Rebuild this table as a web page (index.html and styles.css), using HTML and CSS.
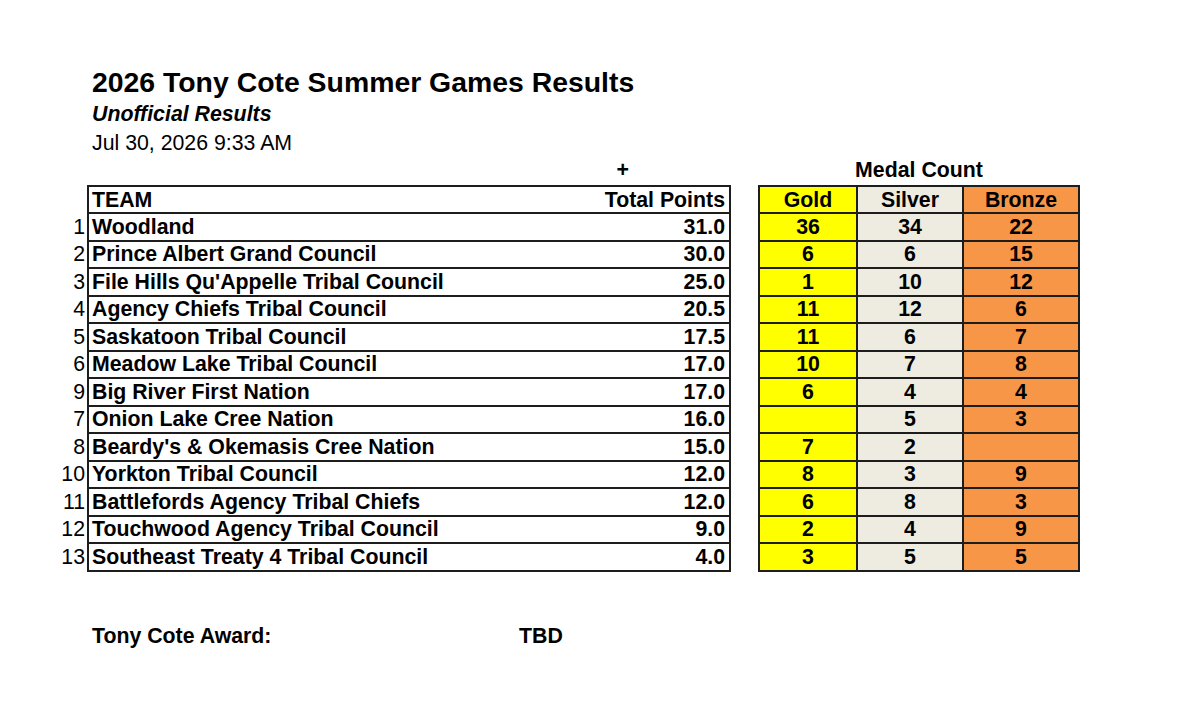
FILE: index.html
```html
<!DOCTYPE html>
<html lang="en">
<head>
<meta charset="utf-8">
<title>2026 Tony Cote Summer Games Results</title>
<link rel="stylesheet" href="styles.css">
</head>
<body>
<div class="page">
  <header class="head">
    <h1 class="title">2026 Tony Cote Summer Games Results</h1>
    <p class="subtitle">Unofficial Results</p>
    <p class="stamp">Jul 30, 2026 9:33 AM</p>
  </header>

  <div class="tables">
    <table class="standings">
      <colgroup>
        <col class="c-rank">
        <col class="c-team">
        <col class="c-points">
      </colgroup>
      <thead>
        <tr class="pre">
          <th class="blank"></th>
          <th class="blank"></th>
          <th class="plus">+</th>
        </tr>
        <tr class="hdr">
          <th class="rank"></th>
          <th class="team">TEAM</th>
          <th class="points">Total Points</th>
        </tr>
      </thead>
      <tbody>
        <tr><td class="rank">1</td><td class="team">Woodland</td><td class="points">31.0</td></tr>
        <tr><td class="rank">2</td><td class="team">Prince Albert Grand Council</td><td class="points">30.0</td></tr>
        <tr><td class="rank">3</td><td class="team">File Hills Qu'Appelle Tribal Council</td><td class="points">25.0</td></tr>
        <tr><td class="rank">4</td><td class="team">Agency Chiefs Tribal Council</td><td class="points">20.5</td></tr>
        <tr><td class="rank">5</td><td class="team">Saskatoon Tribal Council</td><td class="points">17.5</td></tr>
        <tr><td class="rank">6</td><td class="team">Meadow Lake Tribal Council</td><td class="points">17.0</td></tr>
        <tr><td class="rank">9</td><td class="team">Big River First Nation</td><td class="points">17.0</td></tr>
        <tr><td class="rank">7</td><td class="team">Onion Lake Cree Nation</td><td class="points">16.0</td></tr>
        <tr><td class="rank">8</td><td class="team">Beardy's &amp; Okemasis Cree Nation</td><td class="points">15.0</td></tr>
        <tr><td class="rank">10</td><td class="team">Yorkton Tribal Council</td><td class="points">12.0</td></tr>
        <tr><td class="rank">11</td><td class="team">Battlefords Agency Tribal Chiefs</td><td class="points">12.0</td></tr>
        <tr><td class="rank">12</td><td class="team">Touchwood Agency Tribal Council</td><td class="points">9.0</td></tr>
        <tr><td class="rank">13</td><td class="team">Southeast Treaty 4 Tribal Council</td><td class="points">4.0</td></tr>
      </tbody>
    </table>

    <table class="medals">
      <colgroup>
        <col class="c-gold">
        <col class="c-silver">
        <col class="c-bronze">
      </colgroup>
      <thead>
        <tr class="pre">
          <th class="caption" colspan="3">Medal Count</th>
        </tr>
        <tr class="hdr">
          <th class="gold">Gold</th>
          <th class="silver">Silver</th>
          <th class="bronze">Bronze</th>
        </tr>
      </thead>
      <tbody>
        <tr><td class="gold">36</td><td class="silver">34</td><td class="bronze">22</td></tr>
        <tr><td class="gold">6</td><td class="silver">6</td><td class="bronze">15</td></tr>
        <tr><td class="gold">1</td><td class="silver">10</td><td class="bronze">12</td></tr>
        <tr><td class="gold">11</td><td class="silver">12</td><td class="bronze">6</td></tr>
        <tr><td class="gold">11</td><td class="silver">6</td><td class="bronze">7</td></tr>
        <tr><td class="gold">10</td><td class="silver">7</td><td class="bronze">8</td></tr>
        <tr><td class="gold">6</td><td class="silver">4</td><td class="bronze">4</td></tr>
        <tr><td class="gold"></td><td class="silver">5</td><td class="bronze">3</td></tr>
        <tr><td class="gold">7</td><td class="silver">2</td><td class="bronze"></td></tr>
        <tr><td class="gold">8</td><td class="silver">3</td><td class="bronze">9</td></tr>
        <tr><td class="gold">6</td><td class="silver">8</td><td class="bronze">3</td></tr>
        <tr><td class="gold">2</td><td class="silver">4</td><td class="bronze">9</td></tr>
        <tr><td class="gold">3</td><td class="silver">5</td><td class="bronze">5</td></tr>
      </tbody>
    </table>
  </div>

  <footer class="award">
    <span class="award-label">Tony Cote Award:</span>
    <span class="award-value">TBD</span>
  </footer>
</div>
</body>
</html>
```

FILE: styles.css
```css
* {
  box-sizing: border-box;
}

html, body {
  margin: 0;
  padding: 0;
  background: #ffffff;
}

body {
  font-family: "Liberation Sans", Arial, Helvetica, sans-serif;
  color: #000000;
  width: 1183px;
  height: 714px;
  overflow: hidden;
}

.page {
  padding-top: 65px;
}

.head {
  padding-left: 92px;
}

.title {
  margin: 0;
  font-size: 28.4px;
  line-height: 35px;
  font-weight: bold;
}

.subtitle {
  margin: 0;
  font-size: 21.3px;
  line-height: 29px;
  font-weight: bold;
  font-style: italic;
}

.stamp {
  margin: 0;
  font-size: 21.3px;
  line-height: 29px;
}

.tables {
  display: flex;
  align-items: flex-start;
  padding-left: 50px;
}

table {
  border-collapse: collapse;
  table-layout: fixed;
  font-size: 21.3px;
  line-height: 24px;
}

th, td {
  padding: 0;
  vertical-align: middle;
  white-space: nowrap;
}

.pre th {
  height: 27px;
  vertical-align: bottom;
  padding-bottom: 3px;
  font-weight: bold;
  border: none;
}

.hdr th {
  height: 27px;
}

tbody td {
  height: 27.5px;
}

/* standings table */
.standings .c-rank { width: 38px; }
.standings .c-team { width: 502px; }
.standings .c-points { width: 140px; }

.standings .rank {
  text-align: right;
  padding-right: 2px;
  font-weight: normal;
  border: none;
}

.standings .team {
  text-align: left;
  padding-left: 3px;
  font-weight: bold;
  border-top: 2px solid #1d1d1d;
  border-bottom: 2px solid #1d1d1d;
  border-left: 2px solid #1d1d1d;
}

.standings .points {
  text-align: right;
  padding-right: 4px;
  font-weight: bold;
  border-top: 2px solid #1d1d1d;
  border-bottom: 2px solid #1d1d1d;
  border-right: 2px solid #1d1d1d;
}

.standings .pre .plus {
  text-align: right;
  padding-right: 101px;
  border: none;
}

.standings .pre .blank {
  border: none;
}

/* medal table */
.medals {
  margin-left: 27px;
}

.medals .c-gold { width: 98px; }
.medals .c-silver { width: 106px; }
.medals .c-bronze { width: 116px; }

.medals .caption {
  text-align: center;
}

.medals .gold,
.medals .silver,
.medals .bronze {
  text-align: center;
  font-weight: bold;
  border: 2px solid #1d1d1d;
}

.medals .gold { background: #ffff00; }
.medals .silver { background: #eeece1; }
.medals .bronze { background: #f79646; }

/* footer */
.award {
  display: flex;
  padding-left: 92px;
  margin-top: 52px;
  font-size: 21.3px;
  line-height: 24px;
  font-weight: bold;
}

.award-label {
  width: 427px;
}
```
